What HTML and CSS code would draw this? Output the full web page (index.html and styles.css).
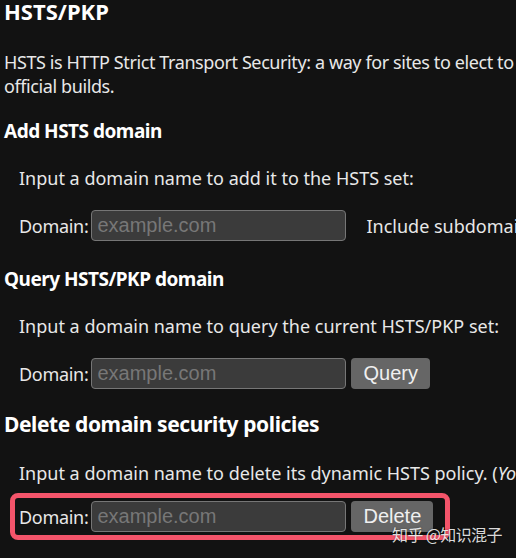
FILE: index.html
```html
<!DOCTYPE html>
<html lang="en">
<head>
  <meta charset="UTF-8">
  <title>HSTS/PKP</title>
  <link rel="stylesheet" href="styles.css">
</head>
<body>
  <div class="page">
    <h2>HSTS/PKP</h2>
    <p class="intro">HSTS is HTTP Strict Transport Security: a way for sites to elect to always use HTTPS. See https://www.chromium.org/hsts. PKP is Public Key Pinning: Chrome "pins" certain public keys for certain sites in<br>official builds.</p>

    <h3>Add HSTS domain</h3>
    <div class="section">
      <p>Input a domain name to add it to the HSTS set:</p>
      <div class="row">
        <label><span class="lbl">Domain:</span><input type="text" placeholder="example.com"></label>
        <label class="check">Include subdomains for HSTS: <input type="checkbox"></label>
      </div>
    </div>

    <h3>Query HSTS/PKP domain</h3>
    <div class="section">
      <p>Input a domain name to query the current HSTS/PKP set:</p>
      <div class="row">
        <label><span class="lbl">Domain:</span><input type="text" placeholder="example.com"></label>
        <button>Query</button>
      </div>
    </div>

    <h3 class="big">Delete domain security policies</h3>
    <div class="section last">
      <p>Input a domain name to delete its dynamic HSTS policy. (<i>You cannot delete preloaded entries.</i>):</p>
      <div class="row marked">
        <label><span class="lbl">Domain:</span><input type="text" placeholder="example.com"></label>
        <button>Delete</button>
      </div>
    </div>
  </div>

  <div class="watermark">知乎 @知识混子</div>
</body>
</html>
```

FILE: styles.css
```css
html {
  overflow: hidden;
  background: #121212;
}
body {
  margin: 0;
  font-family: "Noto Sans", "Open Sans", sans-serif;
  font-size: 18px;
  line-height: 24px;
  color: #e8e8e8;
  background: #121212;
}
.page {
  padding: 0 4px;
  white-space: nowrap;
}
h2 {
  font-size: 22px;
  line-height: 22px;
  color: #fff;
  margin: 0 0 28px;
}
h3 {
  font-size: 19px;
  line-height: 24px;
  letter-spacing: -0.5px;
  color: #fff;
  margin: 0 0 23px;
}
h3.big {
  font-size: 21px;
  letter-spacing: -0.4px;
  margin: -3px 0 25px;
}
p {
  margin: 0 0 20px;
}
.intro {
  margin-bottom: 21px;
  letter-spacing: -0.4px;
}
.section {
  padding-left: 15px;
  margin-bottom: 26px;
}
.last p {
  margin-bottom: 16px;
}
.row {
  display: flex;
  align-items: center;
  gap: 20px;
  height: 31px;
  position: relative;
}
label {
  display: flex;
  align-items: center;
}
.lbl {
  letter-spacing: -0.3px;
}
label input[type="text"] {
  margin-left: 3px;
}
input[type="text"] {
  width: 255px;
  height: 31px;
  box-sizing: border-box;
  padding: 0 5px;
  margin: 0;
  font-family: "Liberation Sans", Arial, sans-serif;
  font-size: 20px;
  color: #ddd;
  background: #3b3b3b;
  border: 1px solid #767676;
  border-radius: 4px;
}
input::placeholder {
  color: #777;
}
input[type="checkbox"] {
  margin: 0 0 0 6px;
}
button {
  height: 31px;
  padding: 0 12px;
  margin-left: -15px;
  font-family: "Liberation Sans", Arial, sans-serif;
  font-size: 20px;
  color: #f0f0f0;
  background: #666;
  border: none;
  border-radius: 4px;
}
.marked::after {
  content: "";
  position: absolute;
  top: -8px;
  bottom: -8px;
  left: -9px;
  width: 440px;
  box-sizing: border-box;
  border: 5px solid #f4546a;
  border-radius: 8px;
  pointer-events: none;
}
.watermark {
  position: absolute;
  left: 392px;
  top: 522px;
  font-family: "Noto Sans CJK SC", sans-serif;
  font-size: 16px;
  letter-spacing: -0.6px;
  color: rgba(255, 255, 255, 0.85);
  text-shadow: 0 0 2px rgba(0, 0, 0, 0.4);
}
```
